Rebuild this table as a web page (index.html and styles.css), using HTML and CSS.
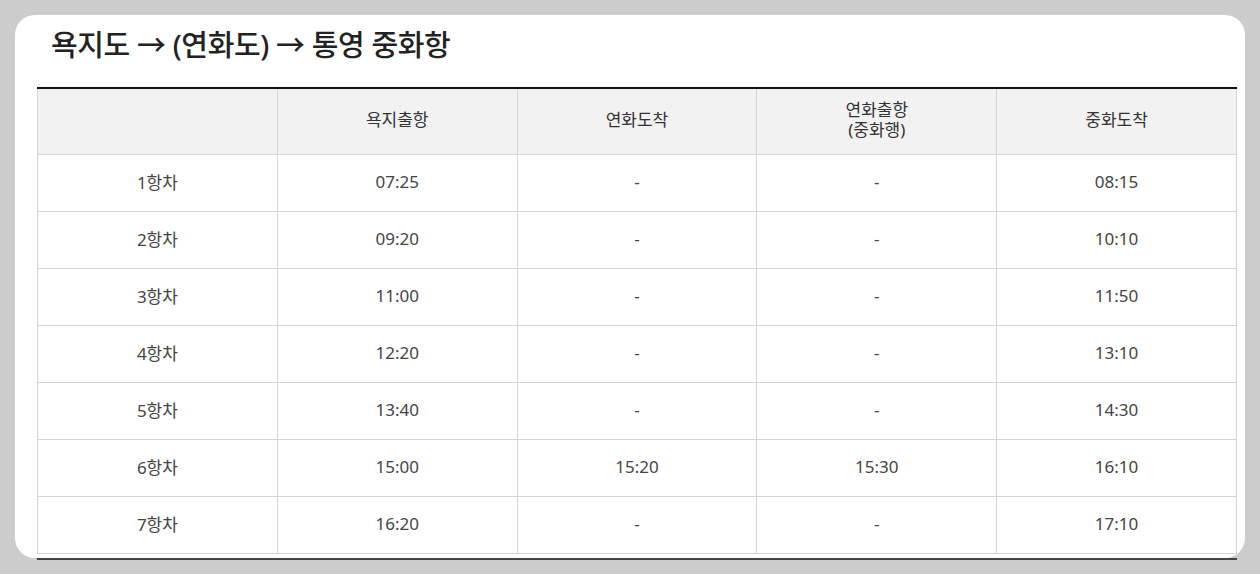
FILE: index.html
```html
<!DOCTYPE html>
<html lang="ko">

<head>
    <meta charset="UTF-8">
    <meta name="viewport" content="width=device-width, initial-scale=1.0">
    <title>욕지도 → 통영 중화항</title>
    <link rel="stylesheet" href="styles.css">
</head>

<body>

    <div class="card">
        <h2 class="route-title">욕지도 → (연화도) → 통영 중화항</h2>

        <div class="table-wrap">
            <table class="timetable">
                <thead>
                    <tr>
                        <th></th>
                        <th>욕지출항</th>
                        <th>연화도착</th>
                        <th>연화출항<br>(중화행)</th>
                        <th>중화도착</th>
                    </tr>
                </thead>
                <tbody>
                    <tr><td>1항차</td><td>07:25</td><td>-</td><td>-</td><td>08:15</td></tr>
                    <tr><td>2항차</td><td>09:20</td><td>-</td><td>-</td><td>10:10</td></tr>
                    <tr><td>3항차</td><td>11:00</td><td>-</td><td>-</td><td>11:50</td></tr>
                    <tr><td>4항차</td><td>12:20</td><td>-</td><td>-</td><td>13:10</td></tr>
                    <tr><td>5항차</td><td>13:40</td><td>-</td><td>-</td><td>14:30</td></tr>
                    <tr><td>6항차</td><td>15:00</td><td>15:20</td><td>15:30</td><td>16:10</td></tr>
                    <tr><td>7항차</td><td>16:20</td><td>-</td><td>-</td><td>17:10</td></tr>
                </tbody>
            </table>
        </div>
    </div>

</body>

</html>
```

FILE: styles.css
```css
body {
    margin: 0;
    padding: 15px 15px 0 15px;
    height: 574px;
    box-sizing: border-box;
    overflow: hidden;
    background-color: #cccccc;
    font-family: "Noto Sans", "Noto Sans CJK KR", sans-serif;
    color: #333;
}

.card {
    background-color: white;
    border-radius: 20px;
    padding: 0 8px 0 22px;
    height: 543px;
    box-sizing: border-box;
}

.route-title {
    margin: 0;
    padding: 10px 0 0 14px;
    height: 72px;
    box-sizing: border-box;
    font-size: 29px;
    font-weight: 500;
    line-height: 40px;
    color: #222;
    letter-spacing: -0.4px;
}

.table-wrap {
    border-top: 2px solid #111;
    border-bottom: 2px solid #444;
    padding-bottom: 4px;
}

.timetable {
    width: 1200px;
    border-collapse: collapse;
    table-layout: fixed;
}

.timetable th,
.timetable td {
    border: 1px solid #d4d4d4;
    text-align: center;
    font-size: 17px;
    color: #444;
    height: 52px;
    padding: 0 0 4px 0;
}

.timetable tr:first-child th {
    border-top: none;
}

.timetable th {
    background-color: #f2f2f2;
    font-weight: 400;
    line-height: 20px;
    height: 61px;
    color: #333;
}
```
